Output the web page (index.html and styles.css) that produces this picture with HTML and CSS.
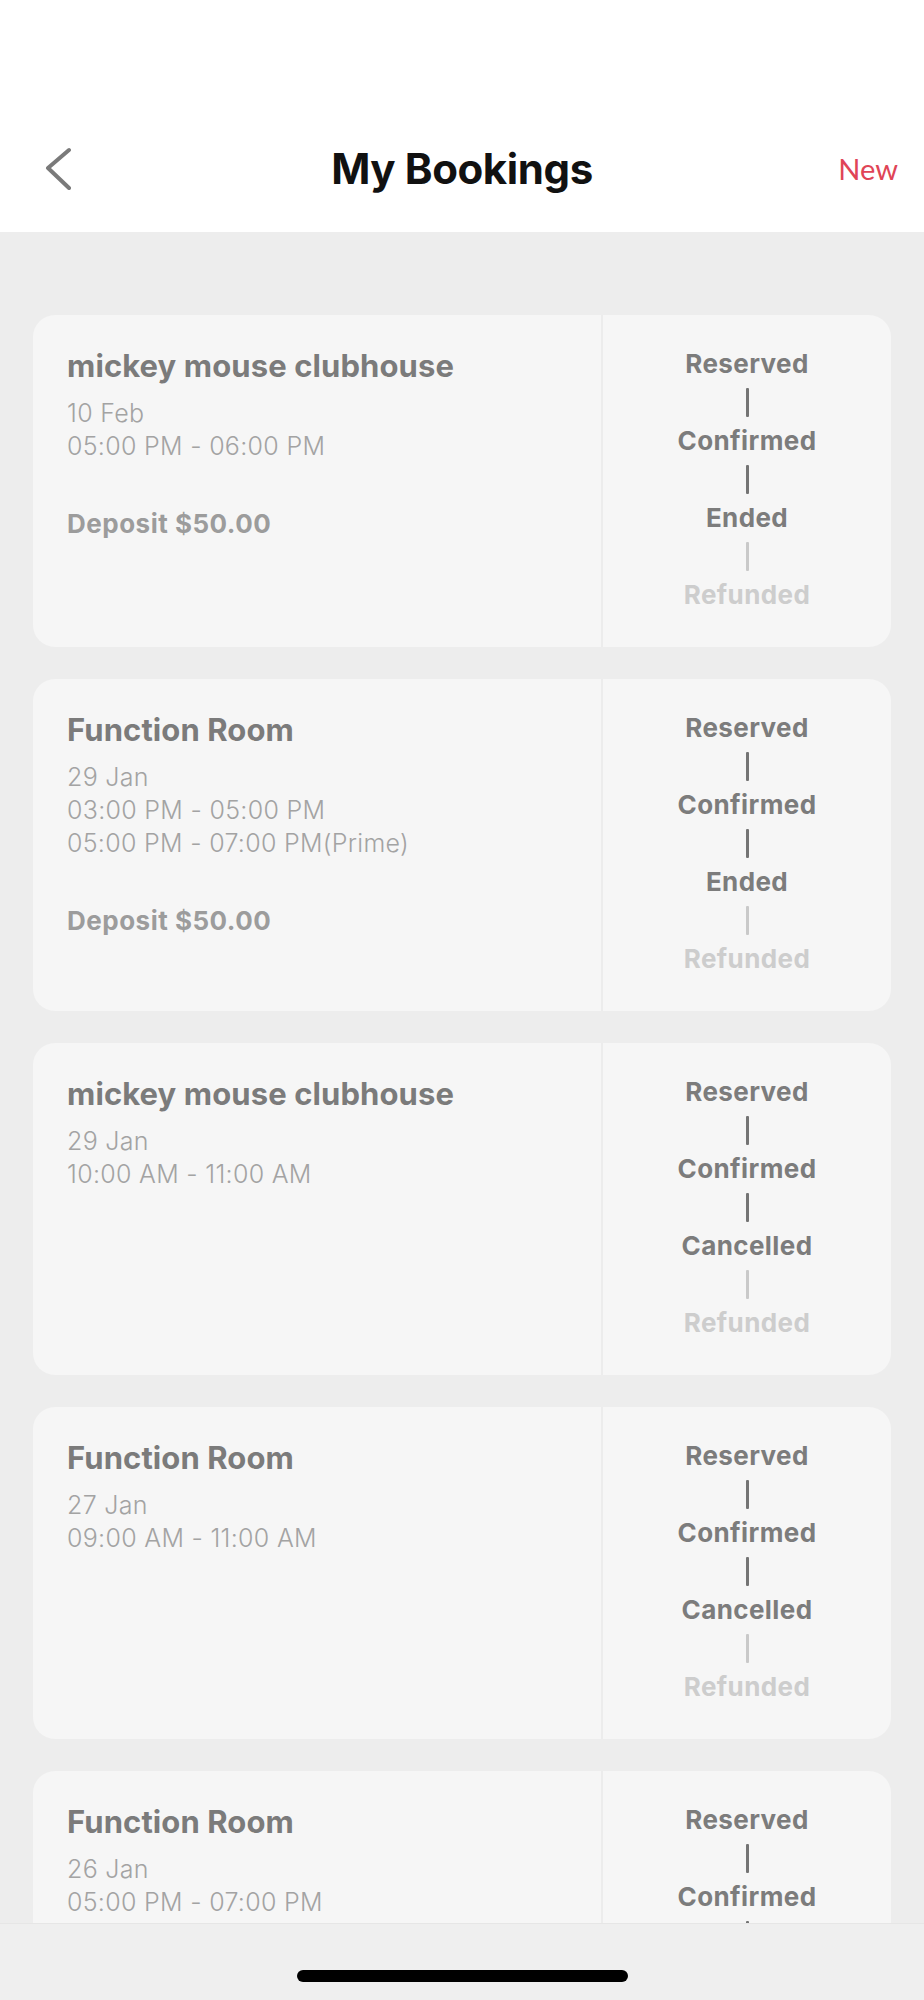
FILE: index.html
```html
<!DOCTYPE html>
<html lang="en">
<head>
<meta charset="utf-8">
<title>My Bookings</title>
<link rel="stylesheet" href="styles.css">
</head>
<body>
<div class="app">
  <header class="header">
    <nav class="nav">
      <div class="nav-left">
        <svg class="back" width="30" height="44" viewBox="0 0 30 44" aria-label="Back">
          <polyline points="24,4 3,22 24,42" fill="none" stroke="#7a7a7a" stroke-width="4" stroke-linecap="round" stroke-linejoin="round"/>
        </svg>
      </div>
      <h1 class="title">My Bookings</h1>
      <div class="nav-right"><span class="new">New</span></div>
    </nav>
  </header>

  <main class="list">
    <article class="card">
      <div class="info">
        <h2 class="name">mickey mouse clubhouse</h2>
        <div class="times">
          <p>10 Feb</p>
          <p>05:00 PM - 06:00 PM</p>
        </div>
        <p class="deposit">Deposit $50.00</p>
      </div>
      <div class="status">
        <span class="step">Reserved</span>
        <span class="bar"></span>
        <span class="step">Confirmed</span>
        <span class="bar"></span>
        <span class="step">Ended</span>
        <span class="bar bar-off"></span>
        <span class="step step-off">Refunded</span>
      </div>
    </article>

    <article class="card">
      <div class="info">
        <h2 class="name">Function Room</h2>
        <div class="times">
          <p>29 Jan</p>
          <p>03:00 PM - 05:00 PM</p>
          <p>05:00 PM - 07:00 PM(Prime)</p>
        </div>
        <p class="deposit">Deposit $50.00</p>
      </div>
      <div class="status">
        <span class="step">Reserved</span>
        <span class="bar"></span>
        <span class="step">Confirmed</span>
        <span class="bar"></span>
        <span class="step">Ended</span>
        <span class="bar bar-off"></span>
        <span class="step step-off">Refunded</span>
      </div>
    </article>

    <article class="card">
      <div class="info">
        <h2 class="name">mickey mouse clubhouse</h2>
        <div class="times">
          <p>29 Jan</p>
          <p>10:00 AM - 11:00 AM</p>
        </div>
      </div>
      <div class="status">
        <span class="step">Reserved</span>
        <span class="bar"></span>
        <span class="step">Confirmed</span>
        <span class="bar"></span>
        <span class="step">Cancelled</span>
        <span class="bar bar-off"></span>
        <span class="step step-off">Refunded</span>
      </div>
    </article>

    <article class="card">
      <div class="info">
        <h2 class="name">Function Room</h2>
        <div class="times">
          <p>27 Jan</p>
          <p>09:00 AM - 11:00 AM</p>
        </div>
      </div>
      <div class="status">
        <span class="step">Reserved</span>
        <span class="bar"></span>
        <span class="step">Confirmed</span>
        <span class="bar"></span>
        <span class="step">Cancelled</span>
        <span class="bar bar-off"></span>
        <span class="step step-off">Refunded</span>
      </div>
    </article>

    <article class="card">
      <div class="info">
        <h2 class="name">Function Room</h2>
        <div class="times">
          <p>26 Jan</p>
          <p>05:00 PM - 07:00 PM</p>
        </div>
      </div>
      <div class="status">
        <span class="step">Reserved</span>
        <span class="bar"></span>
        <span class="step">Confirmed</span>
        <span class="bar"></span>
        <span class="step">Cancelled</span>
        <span class="bar bar-off"></span>
        <span class="step step-off">Refunded</span>
      </div>
    </article>
  </main>

  <footer class="home">
    <span class="home-indicator"></span>
  </footer>
</div>
</body>
</html>
```

FILE: styles.css
```css
* { box-sizing: border-box; }

html, body {
  margin: 0;
  padding: 0;
  background: #ededed;
}

body {
  font-family: Inter, "Liberation Sans", sans-serif;
  width: 924px;
  height: 2000px;
  overflow: hidden;
}

.app {
  display: flex;
  flex-direction: column;
  height: 2000px;
}

.header {
  height: 232px;
  background: #ffffff;
  padding-top: 104px;
  flex-shrink: 0;
}

.nav {
  height: 128px;
  display: grid;
  grid-template-columns: 1fr auto 1fr;
  align-items: center;
  padding: 0 26px;
}

.nav-left {
  display: flex;
  align-items: center;
  padding-left: 19px;
}

.back { display: block; }

.title {
  margin: 0;
  font-weight: 700;
  font-size: 42px;
  letter-spacing: -0.4px;
  color: #111111;
}

.nav-right {
  display: flex;
  justify-content: flex-end;
}

.new {
  font-family: Lato, "Liberation Sans", sans-serif;
  font-size: 29px;
  color: #e04456;
}

.list {
  flex: 1;
  overflow: hidden;
  padding: 83px 33px 0;
  display: flex;
  flex-direction: column;
  gap: 32px;
  background: #ededed;
}

.card {
  flex-shrink: 0;
  height: 332px;
  background: #f6f6f6;
  border-radius: 22px;
  display: flex;
}

.info {
  width: 570px;
  padding: 33px 0 0 34px;
  border-right: 2px solid #ececec;
}

.name {
  margin: 0;
  font-size: 31px;
  line-height: 36px;
  font-weight: 700;
  letter-spacing: 0.1px;
  color: #7b7b7b;
}

.times {
  margin-top: 13px;
}

.times p {
  margin: 0;
  font-size: 25px;
  line-height: 33px;
  font-weight: 300;
  letter-spacing: 0.3px;
  color: #a3a3a3;
}

.deposit {
  margin: 45px 0 0;
  font-size: 26px;
  line-height: 32px;
  font-weight: 700;
  letter-spacing: 0.5px;
  color: #9c9c9c;
}

.status {
  flex: 1;
  display: flex;
  flex-direction: column;
  align-items: center;
  padding-top: 34px;
}

.step {
  font-size: 26px;
  line-height: 30px;
  font-weight: 700;
  letter-spacing: 0.4px;
  color: #7c7c7c;
}

.step-off { color: #cdcdcd; }

.bar {
  width: 3px;
  height: 29px;
  margin: 9px 0;
  background: #747474;
  border-radius: 1px;
}

.bar-off { background: #c9c9c9; }

.home {
  height: 77px;
  flex-shrink: 0;
  background: #efefef;
  border-top: 1px solid #e6e6e6;
  display: flex;
  justify-content: center;
  padding-top: 46px;
}

.home-indicator {
  width: 331px;
  height: 12px;
  border-radius: 6px;
  background: #000000;
}
```
